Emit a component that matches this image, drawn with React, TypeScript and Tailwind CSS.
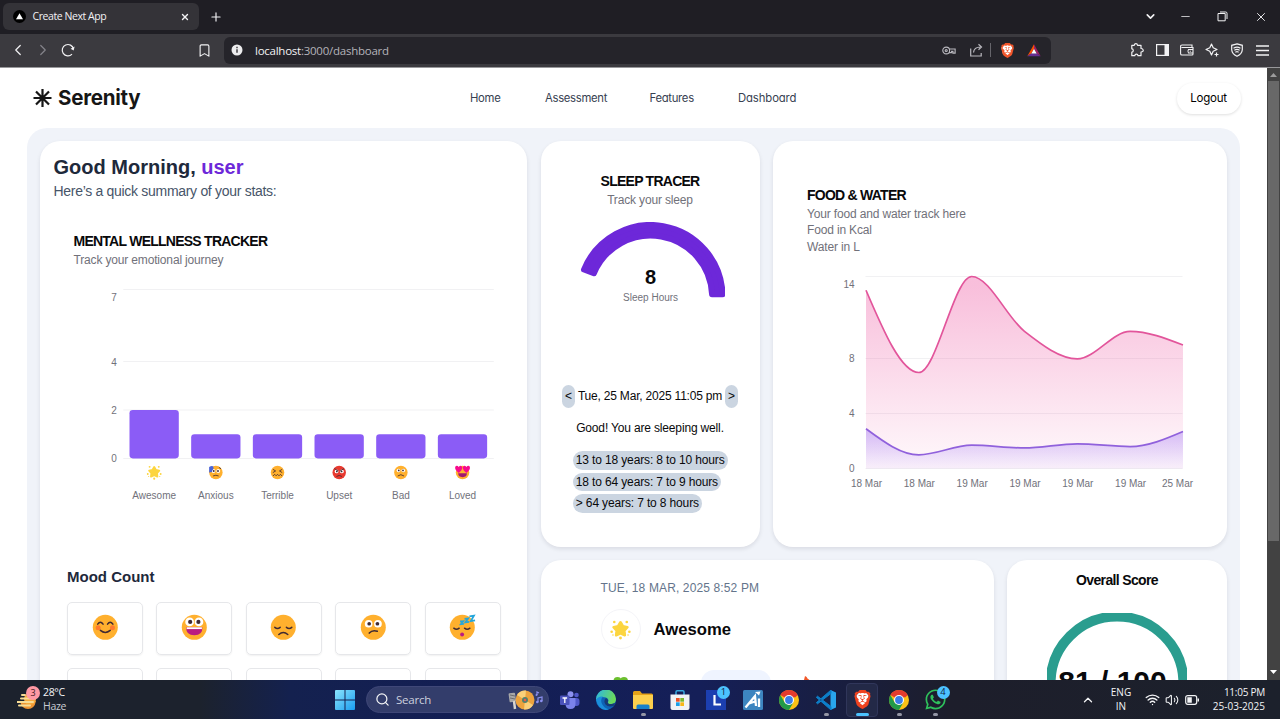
import React from "react";
import { Bookmark, ChevronDown, ChevronLeft, ChevronRight, ChevronUp, Minus, Plus, Search, Volume2, Wifi, X } from "lucide-react";
import { FaWhatsapp } from "react-icons/fa";
import { SiBrave } from "react-icons/si";

type Mood = "star" | "anxious" | "terrible" | "upset" | "bad" | "loved" | "smile" | "grin" | "sad" | "confused" | "sleep";

const ink = "#402a32";

function Eyes({ y = 11, r = 3.9, dx = 5 }: { y?: number; r?: number; dx?: number }) {
  return (
    <g>
      <circle cx={16 - dx} cy={y} r={r} fill="#fff" />
      <circle cx={16 + dx} cy={y} r={r} fill="#fff" />
      <circle cx={16 - dx + 0.6} cy={y} r={r * 0.48} fill={ink} />
      <circle cx={16 + dx - 0.6} cy={y} r={r * 0.48} fill={ink} />
    </g>
  );
}

function Emoji({ mood, x, y, size }: { mood: Mood; x?: number; y?: number; size: number }) {
  const line = { fill: "none", stroke: ink, strokeWidth: 1.7, strokeLinecap: "round" as const, strokeLinejoin: "round" as const };
  return (
    <svg x={x} y={y} width={size} height={size} viewBox="0 0 32 32">
      {mood === "star" ? (
        <g fill="#fcd53f">
          <path d="M16 5l3.6 6 6.9 1.500-4.700 5.200.8 7L16 21.800l-6.600 2.900.8-7L5.500 12.500l6.900-1.500z" stroke="#fcd53f" strokeWidth="4" strokeLinejoin="round" />
          <circle cx="6.500" cy="4.500" r="2" /><circle cx="25.500" cy="4.500" r="2" />
          <circle cx="2.500" cy="19.500" r="2" /><circle cx="29.500" cy="19.500" r="2" /><circle cx="16" cy="29" r="2.200" />
          <circle cx="4.500" cy="24.500" r="1.200" /><circle cx="27.500" cy="24.500" r="1.200" />
        </g>
      ) : (
        <circle cx="16" cy="16" r="14" fill={mood === "upset" ? "#e8392f" : "#ffb02e"} />
      )}
      {mood === "smile" && (
        <g>
          <circle cx="8" cy="16.500" r="2.800" fill="#ff7a2e" /><circle cx="24" cy="16.500" r="2.800" fill="#ff7a2e" />
          <path {...line} d="M7.500 12.500q3-4.500 6 0M18.500 12.500q3-4.500 6 0M10.500 19.500q5.500 4.500 11 0" />
        </g>
      )}
      {mood === "grin" && (
        <g>
          <Eyes y={10} r={4.9} dx={5.2} />
          <path d="M7 16h18q.5 9-9 9t-9-9z" fill="#bb1d80" /><path d="M7.500 16h17v2h-17z" fill="#fff" />
        </g>
      )}
      {mood === "sad" && <path {...line} d="M6.500 16q3 2.500 6 0M19.500 16q3 2.500 6 0M11 24q5-4.500 10 0" />}
      {mood === "confused" && <g><Eyes y={12} r={4.3} dx={5.2} /><path {...line} d="M11.500 22.500q3.500-4 9-2" /></g>}
      {mood === "sleep" && (
        <g>
          <path {...line} d="M6.500 17q3 2.500 6 0M18.500 17q3 2.500 6 0" />
          <circle cx="15.800" cy="24" r="2.200" fill="#bb1d80" />
          <path fill="none" stroke="#26a6d9" strokeWidth="2" d="M24 3.800l5-.8-3.500 6 4.800-.7M18.500 6.500l4-.5-3 4.500 4-.5M13.500 9.500l3.500-.3-2.600 3.300 3.300-.3" />
        </g>
      )}
      {mood === "anxious" && (
        <g>
          <Eyes y={13} r={4} dx={5} /><path {...line} d="M11 23q5-2.500 10 0M23 6l3 2" />
          <path d="M2 5q6-4 9-1v5q-3 2-3 6l-6 1z" fill="#4b63d8" />
        </g>
      )}
      {mood === "terrible" && <path {...line} d="M7 10l5 3-5 3M25 10l-5 3 5 3M7 23l3-3 3 3 3-3 3 3 3-3 3 3" />}
      {mood === "upset" && <g><Eyes y={14} r={4} dx={5.500} /><path {...line} d="M6.500 8.500l7 4M25.500 8.500l-7 4M11 24q5-4 10 0" /></g>}
      {mood === "bad" && <g><Eyes y={12} r={3.8} dx={5} /><path {...line} d="M10 23q6-5 12 0" /></g>}
      {mood === "loved" && (
        <g>
          <path d="M8 17Q-1 11 .8 4.500q3.500-4.500 7.200.5 5-5.500 7.500.5Q15.500 12 8 17zM24 17q9-6 7.200-12.500-3.500-4.500-7.200.5-5-5.500-7.500.5Q16.500 12 24 17z" fill="#f70a8d" />
          <path d="M7 18h18q0 8-9 8t-9-8z" fill="#a01870" />
        </g>
      )}
    </svg>
  );
}

/* Chart helpers */
type Pt = [number, number];

function monotone(p: Pt[]): string {
  const n = p.length;
  const d: number[] = [];
  for (let i = 0; i < n - 1; i++) d.push((p[i + 1][1] - p[i][1]) / (p[i + 1][0] - p[i][0]));
  const t = new Array<number>(n).fill(0);
  for (let i = 1; i < n - 1; i++) {
    const s0 = d[i - 1];
    const s1 = d[i];
    t[i] = (Math.sign(s0) + Math.sign(s1)) * Math.min(Math.abs(s0), Math.abs(s1), Math.abs((s0 + s1) / 4)) || 0;
  }
  t[0] = (3 * d[0] - t[1]) / 2;
  t[n - 1] = (3 * d[n - 2] - t[n - 2]) / 2;
  let out = `M${p[0][0]},${p[0][1]}`;
  for (let i = 0; i < n - 1; i++) {
    const h = (p[i + 1][0] - p[i][0]) / 3;
    out += `C${p[i][0] + h},${p[i][1] + h * t[i]} ${p[i + 1][0] - h},${p[i + 1][1] - h * t[i + 1]} ${p[i + 1][0]},${p[i + 1][1]}`;
  }
  return out;
}

const STEP = 52.83;
const toPoints = (v: number[]): Pt[] => v.map((n, i) => [59.5 + i * STEP, 202.5 - n * 13.714]);
const food = monotone(toPoints([13, 7, 14, 10, 8, 10, 9]));
const water = monotone(toPoints([2.9, 1, 1.7, 1.5, 1.8, 1.6, 2.7]));
const days = ["18 Mar", "18 Mar", "19 Mar", "19 Mar", "19 Mar", "19 Mar", "25 Mar"];

function FoodChart() {
  return (
    <svg className="mt-[10px] block overflow-visible text-[10px]" width="390" height="230" viewBox="0.500 0 390 230" fill="#71717a">
      <defs>
        <linearGradient id="gFood" x1="0" y1="0" x2="0" y2="1">
          <stop offset="0.050" stopColor="#ec4899" stopOpacity="0.350" /><stop offset="0.950" stopColor="#ec4899" stopOpacity="0.050" />
        </linearGradient>
        <linearGradient id="gWater" x1="0" y1="0" x2="0" y2="1">
          <stop offset="0.050" stopColor="#8b5cf6" stopOpacity="0.350" /><stop offset="0.950" stopColor="#8b5cf6" stopOpacity="0.060" />
        </linearGradient>
      </defs>
      <g stroke="#f1f1f3">
        <path d="M59 10.500h317M59 92.500h317M59 147.500h317M59 202.500h317" />
      </g>
      <path d={`${food}V202.500H59.500Z`} fill="url(#gFood)" />
      <path d={food} fill="none" stroke="#e2559b" strokeWidth="1.700" />
      <path d={`${water}V202.500H59.500Z`} fill="url(#gWater)" />
      <path d={water} fill="none" stroke="#9061dc" strokeWidth="1.700" />
      <g textAnchor="end">
        <text x="48" y="21.500">14</text><text x="48" y="96">8</text><text x="48" y="151">4</text><text x="48" y="206">0</text>
      </g>
      <g textAnchor="middle">
        {days.map((d, i) => <text key={i} x={i === 6 ? 371 : 60 + i * STEP} y="221">{d}</text>)}
      </g>
    </svg>
  );
}

const moods: { mood: Mood; name: string; value: number }[] = [
  { mood: "star", name: "Awesome", value: 2 },
  { mood: "anxious", name: "Anxious", value: 1 },
  { mood: "terrible", name: "Terrible", value: 1 },
  { mood: "upset", name: "Upset", value: 1 },
  { mood: "bad", name: "Bad", value: 1 },
  { mood: "loved", name: "Loved", value: 1 },
];

function MoodChart() {
  return (
    <svg className="mt-[11px] block text-[10px]" width="440" height="230" viewBox="0.700 0 440 230" fill="#71717a">
      <path stroke="#f1f1f3" d="M50 9.500h370.500M50 81.500h370.500M50 130h370.500M50 178.500h370.500" />
      <g textAnchor="end">
        <text x="43.500" y="20.500">7</text><text x="43.500" y="85.500">4</text><text x="43.500" y="134">2</text><text x="43.500" y="182">0</text>
      </g>
      {moods.map((m, i) => (
        <g key={m.name}>
          <rect x={56.2 + i * 61.67} y={178.4 - m.value * 24.2} width="49.300" height={m.value * 24.2} rx="3.300" fill="#8b5cf6" />
          <Emoji mood={m.mood} x={73.2 + i * 61.67} y={184.700} size={15.400} />
          <text x={80.900 + i * 61.67} y="218.500" textAnchor="middle">{m.name}</text>
        </g>
      ))}
    </svg>
  );
}

function SleepGauge() {
  const at = (r: number, deg: number) => `${75 + r * Math.cos((deg * Math.PI) / 180)} ${75 - r * Math.sin((deg * Math.PI) / 180)}`;
  const d = `M${at(72, 2.2)}A72 72 0 0 0 ${at(72, 157.6)}L${at(61.5, 157.3)}A61.500 61.500 0 0 1 ${at(61.5, 2.6)}Z`;
  return (
    <svg className="mt-[13px] block" width="150" height="150" viewBox="-0.600 0 150 150" textAnchor="middle">
      <path d={d} fill="#6d28d9" stroke="#6d28d9" strokeWidth="6" strokeLinejoin="round" />
      <text x="75" y="62" className="text-[20px] font-bold" fill="#09090b">8</text>
      <text x="75" y="79" className="text-[10px]" fill="#71717a">Sleep Hours</text>
    </svg>
  );
}

function BrowserChrome() {
  return (
    <header className="h-[68px] shrink-0 border-b border-[#98989b] bg-[#3b3a3f] font-['Open_Sans',sans-serif] text-[#f2f2f4]">
      <div className="flex h-[33.500px] items-start bg-[#1f1e24]">
        <div className="ml-[3px] mt-[3px] flex h-[27px] w-[196px] items-center rounded-md bg-[#343338] pl-[9.500px] pr-[9px]">
          <svg width="13" height="13" viewBox="0 0 13 13"><circle cx="6.500" cy="6.500" r="6.500" fill="#000" /><path d="M6.500 3.200L10 9.200H3z" fill="#fff" /></svg>
          <span className="ml-[7px] text-[10.500px] tracking-[-0.430px]">Create Next App</span>
          <X className="ml-auto" size={10} strokeWidth={3.2} />
        </div>
        <div className="flex h-[33px] flex-1 items-center">
          <Plus className="ml-[10px]" size={14} strokeWidth={2} />
          <ChevronDown className="ml-auto" size={13} strokeWidth={3} />
          <Minus className="ml-[22px]" size={13} strokeWidth={1.4} />
          <svg className="ml-[25px]" width="11" height="11" viewBox="0 0 11 11" fill="none" stroke="currentColor"><path d="M1 2.500h7.200v7.300H1zM3 1h5.700q1.300 0 1.300 1.300V8" /></svg>
          <X className="ml-[26px] mr-[12px]" size={14} strokeWidth={1.6} />
        </div>
      </div>
      <div className="flex h-[33.500px] items-center pl-[5.500px] pr-[5.500px]">
        <span className="flex w-[25px] justify-center"><ChevronLeft size={18} strokeWidth={1.6} /></span>
        <span className="flex w-[25px] justify-center text-[#85848a]"><ChevronRight size={18} strokeWidth={1.600} /></span>
        <span className="flex w-[25px] justify-center">
          <svg width="14" height="14" viewBox="0 0 14 14" fill="none" stroke="currentColor" strokeWidth="1.200"><path d="M11 11.200A5.700 5.700 0 1 1 12.500 6" /><path d="M13.600 3.500l-1 4-3-1.800z" fill="currentColor" stroke="none" /></svg>
        </span>
        <span className="ml-[111px] flex w-[25px] justify-center"><Bookmark size={15} strokeWidth={1.800} /></span>
        <div className="ml-[7.500px] flex h-[27px] w-[827px] shrink-0 items-center rounded-md bg-[#25242a] pl-[7px] pr-2">
          <svg width="12" height="12" viewBox="0 0 12 12"><circle cx="6" cy="6" r="5.500" fill="#ececee" /><path d="M6 5.200v3.600M6 2.800v1.400" stroke="#25242a" strokeWidth="1.300" /></svg>
          <span className="ml-3 text-[11.500px] tracking-[-0.250px] text-[#b4b3b9]"><span className="text-[#f2f2f4]">localhost</span>:3000/dashboard</span>
          <svg className="ml-auto text-[#b9b8be]" width="14" height="9" viewBox="0 0 16 10" fill="none" stroke="currentColor" strokeWidth="1.300"><circle cx="4.800" cy="5" r="3.900" /><circle cx="4.800" cy="5" r="1.200" /><path d="M8.500 3.300h6.500V8h-2.500V6h-1.500v1.500H8" /></svg>
          <svg className="ml-[13px] text-[#b9b8be]" width="15" height="15" viewBox="0 0 15 15" fill="none" stroke="currentColor" strokeWidth="1.200"><path d="M1.700 5.500V13h10.500v-3M4.500 9.500q.5-5.500 7-5.500M9.500 1.200L12.500 4 9.500 6.800" /></svg>
          <span className="ml-[6px] mr-[7px] h-[14px] w-px bg-[#66656b]" />
          <span className="relative flex w-[18px] justify-center">
            <svg width="14" height="15" viewBox="0 0 14 16"><path d="M3 2h8l2 3-1.500 6-4.500 4-4.500-4L1 5z" fill="#fff" /></svg>
            <SiBrave className="absolute left-[1.500px] top-0 text-[#f1562b]" size={15} />
          </span>
          <svg className="ml-[10px]" width="16" height="13" viewBox="0 0 18 14"><path d="M9 0v5L6 10l-4.500 3.500z" fill="#ff5000" /><path d="M9 0l7.500 13.500L12 10 9 5z" fill="#9e1f63" /><path d="M1.500 13.500L6 10h6l4.500 3.500z" fill="#662d91" /><path d="M9 5l3 5.500H6z" fill="#fff" /></svg>
          <span className="w-px" />
        </div>
        <div className="ml-auto flex items-center">
          <span className="flex w-[25px] justify-center"><svg width="14" height="14" viewBox="0 0 14 14" fill="none" stroke="currentColor" strokeWidth="1.200" strokeLinejoin="round"><path d="M1.800 2.300h2.400q.3-1.600 1.700-1.600t1.700 1.600H11v3.200q1.900 0 2.200 1.600T11 9v3.700H8q-.2-1.500-1.600-1.500T4.800 12.700h-3V9.200q1.500 0 1.500-1.700T1.800 5.800z" /></svg></span>
          <span className="flex w-[25px] justify-center"><svg width="13" height="12" viewBox="0 0 13 12"><rect x=".6" y=".6" width="11.800" height="10.800" fill="none" stroke="currentColor" strokeWidth="1.200" /><path d="M8.500 0H13v12H8.500z" fill="currentColor" /></svg></span>
          <span className="flex w-[25px] justify-center"><svg width="14" height="12" viewBox="0 0 14 12" fill="none" stroke="currentColor" strokeWidth="1.100"><path d="M12 3.500V1H2Q.6 1 .6 2.300v7.400Q.6 11 2 11h10q1 0 1-1V3.500H1.500M13 5.500H8.500q-1.300 1.700 0 3.500H13M9.800 7.200h1" /></svg></span>
          <span className="flex w-[25px] justify-center"><svg width="14" height="14" viewBox="0 0 14 14" fill="none" stroke="currentColor" strokeWidth="1.200" strokeLinejoin="round"><path d="M6.500 1l1.700 3.800L12 6.500 8.200 8.200 6.500 12 4.800 8.200 1 6.500l3.800-1.700zM11.500 9.500v4M9.500 11.500h4" /></svg></span>
          <span className="flex w-[25px] justify-center"><svg width="14" height="14" viewBox="0 0 14 14" fill="none" stroke="currentColor" strokeWidth="1.200" strokeLinecap="round"><path d="M7 .8l5.300 1.500v4.500Q12 11 7 13.300 2 11 1.700 6.800V2.300zM4 5q3-1.700 6 0M4.800 7Q7 5.800 9.200 7M5.800 9q1.200-.7 2.400 0" /></svg></span>
          <span className="flex w-[25px] justify-center"><svg width="13" height="11" viewBox="0 0 13 11" stroke="currentColor" strokeWidth="1.300"><path d="M0 1h13M0 5.500h13M0 10h13" /></svg></span>
        </div>
      </div>
    </header>
  );
}

function SiteNav() {
  return (
    <nav className="flex h-[60px] shrink-0 items-center pl-[33px] font-['Inter',sans-serif] [font-feature-settings:'cv11']">
      <svg width="19" height="20" viewBox="0 0 19 20" stroke="#161616" strokeWidth="2.200"><path d="M9.500 1v18M.5 10h18M3 3.500l13 13M16 3.500l-13 13" /></svg>
      <span className="ml-[6px] w-[412px] text-[20.500px] font-bold tracking-[-0.250px] text-[#161616]">Serenity</span>
      <div className="flex w-[706.500px] text-[11.300px] tracking-[-0.300px] text-[#374151]">
        <span className="w-[75px]">Home</span>
        <span className="w-[104.500px]">Assessment</span>
        <span className="w-[88.500px]">Features</span>
        <span className="tracking-[-0.100px]">Dashboard</span>
      </div>
      <button className="flex h-[31px] w-[64px] shrink-0 items-center justify-center rounded-full bg-white pt-px text-[11.500px] tracking-[-0.200px] text-black shadow-[0_1px_3px_rgba(0,0,0,0.130)]">Logout</button>
    </nav>
  );
}

const card = "rounded-[20px] bg-white shadow-[0_2px_4px_rgba(15,23,42,0.100)]";
const heading = "text-[14px] font-bold leading-[14px] tracking-[-0.750px] text-[#09090b]";
const muted = "text-[12px] leading-[16.670px] tracking-[-0.160px] text-[#71717a]";
const pill = "w-fit rounded-full bg-[#cbd5e1] px-[3.300px] leading-[18.400px]";
const counts: Mood[] = ["smile", "grin", "sad", "confused", "sleep"];

function Dashboard() {
  return (
    <div className="ml-[27px] flex w-[1213px] gap-[13.500px] rounded-t-[20px] bg-[#f0f3f9] p-[13px] font-['Liberation_Sans',Arial,sans-serif]">
      <section className={`${card} h-[600px] w-[487px] shrink-0 pl-[13.500px] pt-[13px]`}>
        <h1 className="text-[20px] font-bold leading-[26.500px] text-[#1e293b]">Good Morning, <span className="text-[#6d28d9]">user</span></h1>
        <p className="text-[14px] leading-5 tracking-[-0.300px] text-[#475569]">Here’s a quick summary of your stats:</p>
        <div className="pl-5 pt-[33.500px]">
          <h2 className={heading}>MENTAL WELLNESS TRACKER</h2>
          <p className={`mt-[4px] ${muted}`}>Track your emotional journey</p>
          <div className="pt-[0.500px]"><MoodChart /></div>
        </div>
        <div className="pl-[13.500px] pt-[57px]">
          <h2 className="text-[15px] font-bold leading-5 text-[#1e293b]">Mood Count</h2>
          <div className="mt-[14.500px] grid grid-cols-[repeat(5,76px)] gap-x-[13.400px] gap-y-[13px]">
            {counts.map((m) => (
              <div key={m} className="flex h-[53.500px] justify-center rounded-[5px] border border-[#e6e7ea] pt-[10.500px] shadow-[0_1px_2px_rgba(0,0,0,0.060)]"><Emoji mood={m} size={28.6} /></div>
            ))}
            {counts.map((m) => <div key={m} className="h-[53px] rounded-[5px] border border-[#e6e7ea]" />)}
          </div>
        </div>
      </section>
      <div className="flex flex-col gap-[13.500px]">
        <div className="flex gap-[13.500px]">
          <section className={`${card} flex h-[405.500px] w-[219px] flex-col items-center pt-[33px]`}>
            <h2 className={heading}>SLEEP TRACER</h2>
            <p className={`mt-[4px] ${muted}`}>Track your sleep</p>
            <SleepGauge />
            <div className="mt-[13px] flex items-center gap-[2px] whitespace-nowrap text-[12px] tracking-[-0.200px] text-[#09090b]">
              <span className="flex h-[23px] w-[13.500px] items-center justify-center rounded-full bg-[#cbd5e1] pb-px">&lt;</span>
              <span className="w-[145.500px] pb-px text-center">Tue, 25 Mar, 2025 11:05 pm</span>
              <span className="flex h-[23px] w-[13.500px] items-center justify-center rounded-full bg-[#cbd5e1] pb-px">&gt;</span>
            </div>
            <p className="mt-[12.500px] text-[12px] leading-[17px] tracking-[-0.160px] text-[#09090b]">Good! You are sleeping well.</p>
            <div className="mt-[14px] flex w-[155px] flex-col gap-[3.200px] whitespace-nowrap text-[12px] tracking-[-0.140px] text-[#09090b]">
              <span className={pill}>13 to 18 years: 8 to 10 hours</span>
              <span className={pill}>18 to 64 years: 7 to 9 hours</span>
              <span className={pill}>&gt; 64 years: 7 to 8 hours</span>
            </div>
          </section>
          <section className={`${card} h-[405.500px] w-[454px] pl-[34px] pt-[46.500px]`}>
            <h2 className={heading}>FOOD &amp; WATER</h2>
            <p className={`mt-[4px] ${muted}`}>Your food and water track here<br />Food in Kcal<br />Water in L</p>
            <div className="pt-[0.500px]"><FoodChart /></div>
          </section>
        </div>
        <div className="flex gap-[13.500px]">
          <section className={`${card} h-[180px] w-[453px] pl-[60px] pt-5`}>
            <p className="text-[12px] leading-4 tracking-[0.130px] text-[#64748b]">TUE, 18 MAR, 2025 8:52 PM</p>
            <div className="mt-[13px] flex items-center">
              <span className="flex h-10 w-10 items-center justify-center rounded-full border border-[#f4f4f8]"><Emoji mood="star" size={21} /></span>
              <span className="ml-[13px] text-[16.670px] font-bold text-[#09090b]">Awesome</span>
            </div>
            <div className="mt-[21px] flex">
              <svg className="ml-[11px] mt-[6.500px]" width="18" height="18" viewBox="0 0 18 18" fill="#6bbf2e"><circle cx="5.500" cy="4" r="4" /><circle cx="12" cy="4" r="4" /><circle cx="9" cy="10" r="5" /></svg>
              <span className="ml-[71px] h-8 w-[70px] rounded-[13px] bg-[#eff4ff]" />
              <svg className="ml-[28px] mt-[6px]" width="16" height="18" viewBox="0 0 16 18" fill="#f1592a"><path d="M6 0q2 .5 2.500 2.500Q14 6 14 12q-1 5-6 5-7-1-6-7 0-4 3-6z" /></svg>
            </div>
          </section>
          <section className={`${card} flex h-[180px] w-[220px] flex-col items-center pt-[13px]`}>
            <h2 className="text-[14px] font-bold leading-[14px] tracking-[-0.650px] text-[#09090b]">Overall Score</h2>
            <svg className="mt-[25.500px] block shrink-0" width="140" height="140" viewBox="0 0 140 140">
              <circle cx="70" cy="70" r="66.400" fill="none" stroke="#2a9d8f" strokeWidth="10" />
              <text x="65.500" y="78.500" textAnchor="middle" className="text-[30px] font-bold" fill="#09090b">81 / 100</text>
            </svg>
          </section>
        </div>
      </div>
    </div>
  );
}

function ChromeIcon() {
  return (
    <svg width="20" height="20" viewBox="0 0 20 20">
      <circle cx="10" cy="10" r="10" fill="#fbc116" />
      <path d="M10 10L1.340 5A10 10 0 0 1 18.660 5z" fill="#e33b2e" />
      <path d="M1.340 5A10 10 0 0 0 10 20l4.330-7.500H5.670z" fill="#229a4a" />
      <path d="M10 5h8.660l-2.500 2.500z" fill="#e33b2e" />
      <circle cx="10" cy="10" r="5" fill="#fff" /><circle cx="10" cy="10" r="3.900" fill="#3b7de9" />
    </svg>
  );
}

function TaskItem({ children, dot, badge }: { children: React.ReactNode; dot?: boolean; badge?: string }) {
  return (
    <span className="relative flex h-full w-[36.600px] items-center justify-center">
      {children}
      {dot && <span className="absolute bottom-[3px] left-[16px] h-[3px] w-[5px] rounded-full bg-[#9496a5]" />}
      {badge && <span className="absolute right-[4.500px] top-[6px] flex h-[13px] w-[13px] items-center justify-center rounded-full bg-[#4cc2ff] text-[9.500px] text-[#10233f]">{badge}</span>}
    </span>
  );
}

function Taskbar() {
  return (
    <footer className="flex h-[39px] shrink-0 items-center bg-[linear-gradient(90deg,#1c222d_0,#1c222d_200px,#14214f_290px,#131e54_480px,#151f58_700px,#191e3e_850px,#1d1e2b_950px,#1c212c_1280px)] font-['Open_Sans',sans-serif] text-[#f3f4f6]">
      <div className="flex w-[326px] items-center pl-[17px]">
        <span className="relative">
          <svg width="20" height="20" viewBox="0 0 20 20"><path d="M3 11h16q-1.500 8-8 8t-8-8z" fill="#ee9433" /><circle cx="13" cy="9" r="6" fill="#f6a93b" /><path d="M5 5h3M4 8.500h10M0 12h16M2 15.500h11" stroke="#f7dc95" strokeWidth="2" strokeLinecap="round" /></svg>
          <span className="absolute -top-[4px] left-[9px] flex h-[14px] w-[14px] items-center justify-center rounded-full bg-[#ff99a4] text-[9px] text-[#3d1a1e]">3</span>
        </span>
        <div className="ml-[6px] text-[10.500px] leading-[13.500px] tracking-[-0.350px]"><div>28°C</div><div className="text-[#c9ccd2]">Haze</div></div>
      </div>
      <span className="flex w-[38px] justify-center">
        <svg width="20" height="20" viewBox="0 0 20 20"><defs><linearGradient id="win" x1="0" y1="0" x2="1" y2="1"><stop stopColor="#8be4fc" /><stop offset="1" stopColor="#199cf0" /></linearGradient></defs><path fill="url(#win)" d="M0 1q0-1 1-1h8.500v9.500H0zM10.500 0H19q1 0 1 1v8.500h-9.500zM0 10.500h9.500V20H1q-1 0-1-1zM10.500 10.500H20V19q0 1-1 1h-8.500z" /></svg>
      </span>
      <div className="ml-[2px] flex h-[27px] w-[183px] shrink-0 items-center rounded-full border border-[#3f4778] bg-[#333d6b] pl-[8px]">
        <Search size={15} strokeWidth={2} />
        <span className="ml-[6px] text-[11.500px] tracking-[-0.200px] text-[#cdd0de]">Search</span>
        <svg className="ml-auto mr-[3px]" width="37" height="20" viewBox="0 0 37 20">
          <rect x="1" y="3" width="6.500" height="9" rx="1" fill="#a8a8a8" transform="rotate(-8 4 7)" /><path d="M2 5l5 1M2 8l5 1" stroke="#6d6d70" /><path d="M6 11l1 8" stroke="#d9d6d0" strokeWidth="2.500" />
          <circle cx="17" cy="10" r="9.500" fill="#eda33d" /><path d="M17 10L9 5q3-5 9-4.500zM17 10l8 5q-3 5-9 4.500z" fill="#fad07a" /><circle cx="17" cy="10" r="3" fill="#54806d" /><circle cx="17" cy="10" r="1.200" fill="#f1554a" />
          <path d="M29 5V2l2 1M30 12V8l4-1v4" fill="none" stroke="#8b8ff0" strokeWidth="1.200" /><circle cx="28.500" cy="5" r="1" fill="#8b8ff0" /><circle cx="29.300" cy="12" r="1.300" fill="#8b8ff0" /><circle cx="33.300" cy="11" r="1.300" fill="#8b8ff0" />
        </svg>
      </div>
      <div className="ml-[2.500px] flex h-full">
        <TaskItem>
          <svg width="20" height="18" viewBox="0 0 20 18"><circle cx="16.500" cy="4" r="2.300" fill="#5059c9" /><rect x="13" y="7" width="6.500" height="8" rx="3" fill="#5059c9" /><circle cx="10.500" cy="3.200" r="3" fill="#8b91f0" /><path d="M5.500 7h10v6q0 5-5 5t-5-5z" fill="#7b83eb" /><rect x="0" y="4.500" width="9.500" height="9.500" rx="1" fill="#4b53bc" /><path d="M2.500 7h4.600M4.800 7v5" stroke="#fff" strokeWidth="1.300" /></svg>
        </TaskItem>
        <TaskItem>
          <svg width="20" height="20" viewBox="0 0 20 20"><defs><linearGradient id="edg" x1="0" y1="0" x2="1" y2="0.300"><stop stopColor="#2bb5e8" /><stop offset="1" stopColor="#6bd95b" /></linearGradient></defs><circle cx="10" cy="10" r="10" fill="#0e62b4" /><path d="M0 10A10 10 0 0 1 20 9q0 5-5 5-3.500 0-3-2 1.500-3-2-4.500Q4 5.500 0 10z" fill="url(#edg)" /><path d="M0 10Q2 6 7 6.500q-3 3-1 7.500 2 4 7 5.500Q3 22 0 10z" fill="#1b8edb" /><path d="M10 8q-3 3-.5 6.500 3 3.500 9 1l.3-2.500-3 1q-4.500.5-4-2Q13 10 10 8z" fill="#163b76" /></svg>
        </TaskItem>
        <TaskItem dot>
          <svg width="20" height="18" viewBox="0 0 20 18"><path d="M0 1.500Q0 0 1.500 0H7l2 2.500h9.500q1.500 0 1.500 1.500v6H0z" fill="#e5a218" /><path d="M0 4h20v13q0 1-1 1H1q-1 0-1-1z" fill="#fccf4d" /><path d="M3.500 18v-3q0-1.500 1.500-1.500h10q1.500 0 1.500 1.500v3z" fill="#1880ca" /></svg>
        </TaskItem>
        <TaskItem>
          <svg width="20" height="20" viewBox="0 0 20 20"><path d="M6 5V2q0-1.200 1.200-1.200h5.600Q14 .8 14 2v3" fill="none" stroke="#38a9df" strokeWidth="1.500" /><path d="M.5 4.500h19V18q0 2-2 2h-15q-2 0-2-2z" fill="#f1f3f6" /><path d="M6 8h3.700v3.700H6z" fill="#ec5228" /><path d="M10.300 8H14v3.700h-3.700z" fill="#7cb82f" /><path d="M6 12.300h3.700V16H6z" fill="#1ba0e8" /><path d="M10.300 12.300H14V16h-3.700z" fill="#f8b719" /></svg>
        </TaskItem>
        <TaskItem badge="1">
          <svg width="20" height="20" viewBox="0 0 20 20"><path d="M0 0h20v20H0z" fill="#1c3fb0" /><path d="M8.500 5v9.500H15" fill="none" stroke="#fff" strokeWidth="2.200" /></svg>
        </TaskItem>
        <TaskItem>
          <svg width="20" height="20" viewBox="0 0 20 20"><rect width="20" height="20" rx="1.500" fill="#3d85c0" /><path d="M2.500 17.500L12 6l1 10M6 13.500l6-2" fill="none" stroke="#fff" strokeWidth="2.300" /><path d="M12 2l5.500-.5L16 5.500z" fill="#fff" /><path d="M16 8.500v8.500" stroke="#fff" strokeWidth="2.300" /></svg>
        </TaskItem>
        <TaskItem><ChromeIcon /></TaskItem>
        <TaskItem dot>
          <svg width="20" height="20" viewBox="0 0 20 20"><path d="M14.500 0L20 2.500v15L14.500 20z" fill="#29a6ee" /><path d="M1.500 6.200L15 16.500V20L.3 7.300zM1.500 13.800L15 3.500V0L.3 12.700z" fill="#0d7fc9" stroke="#0d7fc9" strokeLinejoin="round" /></svg>
        </TaskItem>
        <span className="relative flex h-full w-[36.600px] items-center justify-center">
          <span className="absolute left-[2px] top-[3px] h-[34px] w-[32px] rounded border border-[#30365a] bg-[#232947]" />
          <svg className="relative" width="15" height="17" viewBox="0 0 16 19"><path d="M4 2h8l3 3-2 8-5 4-5-4L1 5z" fill="#fff" /></svg>
          <SiBrave className="absolute left-[9px] top-[10px] text-[#f0421f]" size={19} />
          <span className="absolute bottom-[3px] left-[12px] h-[3px] w-[13px] rounded-full bg-[#4cc2ff]" />
        </span>
        <TaskItem dot><ChromeIcon /></TaskItem>
        <TaskItem dot badge="4"><FaWhatsapp size={23} color="#2fc25c" /></TaskItem>
      </div>
      <div className="ml-auto flex items-center pr-[15px] text-[10px] leading-[13.500px]">
        <ChevronUp size={14} strokeWidth={2.200} />
        <div className="ml-[15px] w-[22px] text-center"><div>ENG</div><div>IN</div></div>
        <Wifi className="ml-[13px]" size={15} strokeWidth={2.200} />
        <Volume2 className="ml-[5px]" size={14} strokeWidth={1.800} />
        <svg className="ml-[6px]" width="14" height="10" viewBox="0 0 14 10"><rect x=".7" y=".7" width="11" height="8.600" rx="2" fill="none" stroke="currentColor" strokeWidth="1.200" /><path d="M2.300 2.300h4.500v5.400H2.300zM12.500 3.500H14v3h-1.500z" fill="currentColor" /></svg>
        <div className="ml-[13px] w-[53px] whitespace-nowrap text-right"><div className="tracking-[-0.250px]">11:05 PM</div><div>25-03-2025</div></div>
      </div>
    </footer>
  );
}

export default function App() {
  return (
    <div className="flex h-[719px] w-[1280px] flex-col overflow-hidden bg-white">
      <BrowserChrome />
      <div className="flex h-[612px] shrink-0">
        <main className="flex w-[1267px] flex-col overflow-hidden">
          <SiteNav />
          <Dashboard />
        </main>
        <aside className="flex w-[13px] flex-col items-center bg-[#424242]">
          <svg className="mt-[5px] shrink-0" width="7" height="4" viewBox="0 0 7 4"><path d="M3.500 0L7 4H0z" fill="#9c9c9c" /></svg>
          <span className="mt-[4px] h-[460px] w-[11px] shrink-0 bg-[#686868]" />
          <svg className="mb-[6px] mt-auto shrink-0" width="7" height="4" viewBox="0 0 7 4"><path d="M3.500 4L7 0H0z" fill="#fff" /></svg>
        </aside>
      </div>
      <Taskbar />
    </div>
  );
}
